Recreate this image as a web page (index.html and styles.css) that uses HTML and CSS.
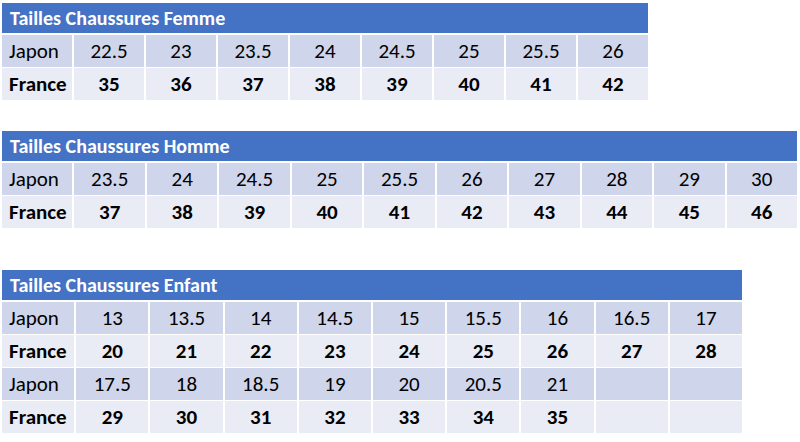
FILE: index.html
```html
<!DOCTYPE html>
<html lang="fr">
<head>
<meta charset="utf-8">
<link rel="stylesheet" href="styles.css">
</head>
<body>
<div class="page">
  <section class="size-table t-femme">
    <div class="title">Tailles Chaussures Femme</div>
    <div class="row jp"><div class="cell label">Japon</div><div class="cell">22.5</div><div class="cell">23</div><div class="cell">23.5</div><div class="cell">24</div><div class="cell">24.5</div><div class="cell">25</div><div class="cell">25.5</div><div class="cell">26</div></div>
    <div class="row fr"><div class="cell label">France</div><div class="cell">35</div><div class="cell">36</div><div class="cell">37</div><div class="cell">38</div><div class="cell">39</div><div class="cell">40</div><div class="cell">41</div><div class="cell">42</div></div>
  </section>
  <section class="size-table t-homme">
    <div class="title">Tailles Chaussures Homme</div>
    <div class="row jp"><div class="cell label">Japon</div><div class="cell">23.5</div><div class="cell">24</div><div class="cell">24.5</div><div class="cell">25</div><div class="cell">25.5</div><div class="cell">26</div><div class="cell">27</div><div class="cell">28</div><div class="cell">29</div><div class="cell">30</div></div>
    <div class="row fr"><div class="cell label">France</div><div class="cell">37</div><div class="cell">38</div><div class="cell">39</div><div class="cell">40</div><div class="cell">41</div><div class="cell">42</div><div class="cell">43</div><div class="cell">44</div><div class="cell">45</div><div class="cell">46</div></div>
  </section>
  <section class="size-table t-enfant">
    <div class="title">Tailles Chaussures Enfant</div>
    <div class="row jp"><div class="cell label">Japon</div><div class="cell">13</div><div class="cell">13.5</div><div class="cell">14</div><div class="cell">14.5</div><div class="cell">15</div><div class="cell">15.5</div><div class="cell">16</div><div class="cell">16.5</div><div class="cell">17</div></div>
    <div class="row fr"><div class="cell label">France</div><div class="cell">20</div><div class="cell">21</div><div class="cell">22</div><div class="cell">23</div><div class="cell">24</div><div class="cell">25</div><div class="cell">26</div><div class="cell">27</div><div class="cell">28</div></div>
    <div class="row jp"><div class="cell label">Japon</div><div class="cell">17.5</div><div class="cell">18</div><div class="cell">18.5</div><div class="cell">19</div><div class="cell">20</div><div class="cell">20.5</div><div class="cell">21</div><div class="cell"></div><div class="cell"></div></div>
    <div class="row fr"><div class="cell label">France</div><div class="cell">29</div><div class="cell">30</div><div class="cell">31</div><div class="cell">32</div><div class="cell">33</div><div class="cell">34</div><div class="cell">35</div><div class="cell"></div><div class="cell"></div></div>
  </section>
</div>
</body>
</html>
```
FILE: styles.css
```css
html, body {
  margin: 0;
  padding: 0;
  background: #ffffff;
}
body {
  font-family: Carlito, Lato, "Liberation Sans", sans-serif;
  color: #000000;
}
.page {
  display: flex;
  flex-direction: column;
  align-items: flex-start;
  padding: 3px 0 0 2px;
}
.size-table {
  display: flex;
  flex-direction: column;
  gap: 1px;
}
.t-femme { width: 646px; }
.t-homme { width: 795px; margin-top: 31px; }
.t-enfant { width: 740px; margin-top: 42px; }
.title {
  height: 30px;
  background: #4472c4;
  color: #ffffff;
  font-weight: bold;
  font-size: 20px;
  line-height: 31px;
  padding-left: 8px;
  margin-bottom: 1px;
  white-space: nowrap;
}
.row {
  display: grid;
  grid-auto-flow: column;
  grid-auto-columns: 1fr;
  column-gap: 2px;
  height: 32px;
}
.cell {
  text-align: center;
  font-size: 21px;
  line-height: 32px;
  white-space: nowrap;
}
.cell.label {
  text-align: left;
  padding-left: 7px;
}
.jp .cell { background: #cfd5ea; }
.fr .cell { background: #e9ebf5; font-weight: bold; }
```
